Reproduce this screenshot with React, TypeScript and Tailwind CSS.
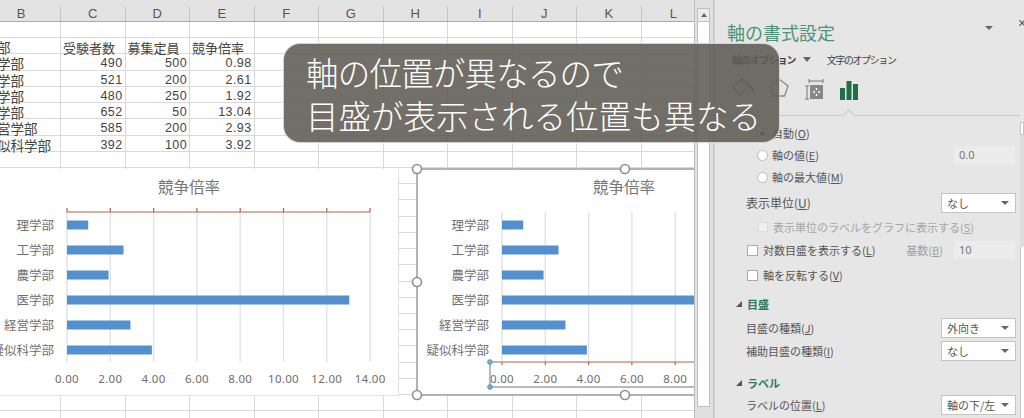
import React from "react";

const JP = "font-['Noto_Sans_CJK_JP','Noto_Sans',sans-serif]";
const colWidths = [61, 64.5, 64.5, 64.5, 64.5, 64.5, 64.5, 64.5, 64.5, 64.5, 64.5];
const letters = ["B", "C", "D", "E", "F", "G", "H", "I", "J", "K", "L"];
const rows: [string, string, string, string][] = [
  ["", "", "", ""],
  ["部", "受験者数", "募集定員", "競争倍率"],
  ["学部", "490", "500", "0.98"],
  ["学部", "521", "200", "2.61"],
  ["学部", "480", "250", "1.92"],
  ["学部", "652", "50", "13.04"],
  ["営学部", "585", "200", "2.93"],
  ["似科学部", "392", "100", "3.92"],
];
const cats = ["理学部", "工学部", "農学部", "医学部", "経営学部", "疑似科学部"];
const vals = [0.98, 2.61, 1.92, 13.04, 2.93, 3.92];
const U = 21.65;

function Chart({ x0, titleX, top, max, labelsRight }: { x0: number; titleX: number; top: boolean; max: number; labelsRight: number }) {
  const ticks: number[] = [];
  for (let i = 0; i <= max; i += 2) ticks.push(i);
  const axisY = top ? 43 : 193;
  return (
    <>
      <text x={titleX} y={24} textAnchor="middle" fontSize="15.5" fill="#777" fontFamily="Noto Sans CJK JP">競争倍率</text>
      {ticks.map((t) => (
        <line key={t} x1={x0 + t * U} x2={x0 + t * U} y1={43} y2={193} stroke="#e3e3e3" strokeWidth="1.4" />
      ))}
      {vals.map((v, i) => (
        <rect key={i} x={x0} y={51.5 + i * 25} width={v * U} height={9} fill="#5290d0" />
      ))}
      {cats.map((c, i) => (
        <text key={c} x={labelsRight} y={60.5 + i * 25} textAnchor="end" fontSize="12.5" fill="#707070" fontFamily="Noto Sans CJK JP">{c}</text>
      ))}
      <line x1={x0} x2={x0 + max * U + (top ? 0 : 30)} y1={axisY} y2={axisY} stroke="#b5604c" strokeWidth="1.2" />
      {ticks.map((t) => (
        <line key={t} x1={x0 + t * U} x2={x0 + t * U} y1={top ? axisY - 4 : axisY} y2={top ? axisY : axisY + 3} stroke="#b5604c" strokeWidth="1.2" />
      ))}
      {ticks.map((t) => (
        <text key={t} x={x0 + t * U} y={214} textAnchor="middle" fontSize="11.5" letterSpacing="0.3" fill="#6e6e6e" fontFamily="Noto Sans">{t.toFixed(2)}</text>
      ))}
    </>
  );
}

function Tri() {
  return <span className="w-0 h-0 border-x-[4px] border-x-transparent border-t-[4px] border-t-[#666]" />;
}

function Select({ v }: { v: string }) {
  return (
    <div className="w-[75px] h-[20px] bg-white border border-[#c4c4c4] flex items-center justify-between pl-[5px] pr-[6px] text-[11px] text-[#555]">
      <span>{v}</span>
      <Tri />
    </div>
  );
}

function Field({ v }: { v: string }) {
  return <div className="w-[61px] h-[18px] bg-[#ececec] flex items-center pl-[5px] text-[11px] text-[#777] font-['Noto_Sans',sans-serif]">{v}</div>;
}

function Radio({ on }: { on?: boolean }) {
  return (
    <span className="w-[11px] h-[11px] rounded-full border border-[#bbb] bg-white flex items-center justify-center mr-[4px]">
      {on && <span className="w-[5px] h-[5px] rounded-full bg-[#777]" />}
    </span>
  );
}

function Check({ off }: { off?: boolean }) {
  return <span className={off ? "w-[10px] h-[10px] bg-[#f0f0f0] border border-[#ddd] mr-[5px]" : "w-[11px] h-[11px] bg-white border border-[#aaa] mr-[5px]"} />;
}

function Section({ t, cls }: { t: string; cls: string }) {
  return (
    <div className={`h-[22px] flex items-center pl-[21px] ${cls}`}>
      <span className="w-0 h-0 border-l-[6px] border-l-transparent border-b-[6px] border-b-[#555] mr-[5px]" />
      <span className="text-[11px] font-bold text-[#2f7a5c]">{t}</span>
    </div>
  );
}

export default function App() {
  return (
    <div className={`relative w-[1024px] h-[418px] overflow-hidden flex bg-[#e6e6e6] ${JP}`}>
      {/* sheet */}
      <div className="relative w-[695px] h-[418px] overflow-hidden bg-white shrink-0 border-r border-[#bdbdbd]">
        <div className="flex h-[22px] pt-[6px] bg-[#e3e3e3] border-b border-[#aaa] w-[800px]">
          {letters.map((l, i) => (
            <div
              key={l}
              style={{ width: colWidths[i] }}
              className={`border-r border-[#c6c6c6] flex items-center justify-center text-[13px] text-[#555] font-['Liberation_Sans',sans-serif] ${l === "B" ? "pr-[18px]" : ""}`}
            >
              {l}
            </div>
          ))}
        </div>
        <div className="w-[800px]">
          {Array.from({ length: 25 }).map((_, r) => (
            <div key={r} className="flex h-[16.22px] border-b border-[#d9d9d9]">
              {colWidths.map((w, c) => {
                const row = rows[r];
                const txt = row && c < 4 ? row[c] : "";
                const isHead = r === 1 && c > 0;
                const isNum = r > 1 && c > 0 && c < 4;
                return (
                  <div
                    key={c}
                    style={{ width: w }}
                    className={`border-r border-[#d9d9d9] flex items-start leading-[19px] whitespace-nowrap text-[#444] ${
                      c === 0 ? "text-[13.5px]" : isHead ? "text-[13px] pl-[2px]" : isNum ? "justify-end pr-[2px] text-[12.5px] tracking-[0.4px] font-['Liberation_Sans',sans-serif]" : ""
                    }`}
                  >
                    {c === 0 ? <span className="-ml-[3px]">{txt}</span> : txt}
                  </div>
                );
              })}
            </div>
          ))}
        </div>

        {/* chart 1 */}
        <svg className="absolute left-0 top-[169px] bg-white border-r border-b border-[#e2e2e2]" width={399} height={227}>
          <Chart x0={67} titleX={189} top max={14} labelsRight={54} />
        </svg>

        {/* chart 2 */}
        <svg className="absolute left-[412px] top-[164px] overflow-visible" width={283} height={236}>
          <rect x={5} y={5} width={290} height={226} fill="#fff" stroke="#ababab" strokeWidth="1.8" />
          <g transform="translate(5 5)">
            <Chart x0={85} titleX={207} top={false} max={8} labelsRight={72} />
            <path d="M73 193H85M73 193V218H283" fill="none" stroke="#a3a3a3" strokeWidth="1.5" />
            <circle cx={73} cy={193} r={2.3} fill="#7fb0d8" stroke="#4f8fc0" />
            <circle cx={73} cy={218} r={2.3} fill="#7fb0d8" stroke="#4f8fc0" />
          </g>
          {[
            [5, 5],
            [213, 5],
            [5, 118],
            [5, 231],
            [213, 231],
          ].map(([x, y]) => (
            <circle key={`${x}-${y}`} cx={x} cy={y} r={4.5} fill="#fff" stroke="#8f8f8f" strokeWidth="1.6" />
          ))}
        </svg>
      </div>

      {/* vertical scrollbar */}
      <div className="w-[19px] h-[418px] shrink-0 pl-[2px] pt-[8px] flex flex-col bg-[#e0e0e0] border-r border-[#c8c8c8]">
        <div className="w-[13px] h-[399px] bg-white border border-[#c0c0c0] flex flex-col">
          <div className="h-[13px] bg-[#ececec] border-b border-[#c0c0c0] flex items-center justify-center">
            <span className="w-0 h-0 border-x-[3px] border-x-transparent border-b-[4px] border-b-[#666]" />
          </div>
        </div>
      </div>

      {/* panel */}
      <div className="relative w-[306px] h-[418px] shrink-0 bg-[#e6e6e6] flex flex-col text-[#555] border-l border-[#d4d4d4]">
        <div className="mt-[14px] h-[36px] flex items-center pl-[12px] text-[18px] text-[#4f9277] relative">
          軸の書式設定
          <span className="absolute left-[270px] top-[12px] w-0 h-0 border-x-[4px] border-x-transparent border-t-[4px] border-t-[#666]" />
          <span className="absolute left-[303px] top-[2px] text-[14px] leading-none text-[#555] font-['Liberation_Sans',sans-serif]">×</span>
        </div>
        <div className="h-[18px] flex items-center pl-[17px] text-[10px] whitespace-nowrap">
          <span className="font-bold tracking-[-0.9px] text-[#444]">軸のオプション</span>
          <span className="ml-[7px] w-0 h-0 border-x-[4px] border-x-transparent border-t-[5px] border-t-[#666]" />
          <span className="ml-[16px] tracking-[-1.4px] text-[#444]">文字のオプション</span>
        </div>
        <div className="h-[40px] flex items-center pl-[16px]">
          <svg width="24" height="24" viewBox="0 0 24 24" fill="none" stroke="#8a8a8a" strokeWidth="1.3">
            <path d="M11 2L2 11l7 8 9-9z" />
            <path d="M11 2v7" />
            <path d="M18 10c2 0 4 3 4 6" stroke="#777" strokeWidth="2" />
          </svg>
          <svg width="22" height="24" viewBox="0 0 22 24" fill="none" stroke="#8a8a8a" strokeWidth="1.3" className="ml-[13px]">
            <path d="M11 3l9 7-3.4 10H5.4L2 10z" />
          </svg>
          <svg width="20" height="22" viewBox="0 0 20 22" className="ml-[14px] mt-[3px]" fill="none" stroke="#777" strokeWidth="1">
            <path d="M5 2h14M5 0v4M19 0v4M1 7h4M3 7v13M1 20h4" />
            <rect x="6" y="6" width="13" height="14" fill="#888" stroke="none" />
            <path d="M12.5 9v2M12.5 15v2M9 13h2M14 13h2" stroke="#fff" strokeWidth="1.4" />
          </svg>
          <svg width="20" height="20" viewBox="0 0 20 20" className="ml-[15px] mt-[3px]" fill="#1f6e45">
            <rect x="1" y="8" width="5" height="12" />
            <rect x="7.5" y="1" width="5" height="19" />
            <rect x="14" y="4" width="5" height="16" />
          </svg>
        </div>
        <div className="h-[8px] border-b border-[#c9c9c9] relative shrink-0">
          <span className="absolute left-[130px] top-[3px] w-[8px] h-[8px] rotate-45 bg-[#e6e6e6] border-l border-t border-[#c9c9c9]" />
        </div>

        <div className="text-[11px] flex flex-col">
          <div className="mt-[6px] h-[22px] flex items-center pl-[42px]"><Radio on />自動(<u>O</u>)</div>
          <div className="h-[22px] flex items-center justify-between pr-[5px]">
            <span className="flex items-center pl-[42px]"><Radio />軸の値(<u>E</u>)</span>
            <Field v="0.0" />
          </div>
          <div className="h-[22px] flex items-center pl-[42px]"><Radio />軸の最大値(<u>M</u>)</div>
          <div className="mt-[4px] h-[22px] flex items-center justify-between pl-[31px] pr-[4px]">
            <span className="text-[12px]">表示単位(<u>U</u>)</span>
            <Select v="なし" />
          </div>
          <div className="mt-[2px] h-[22px] flex items-center pl-[43px] text-[#a5a5a5]"><Check off />表示単位のラベルをグラフに表示する(<u>S</u>)</div>
          <div className="mt-[1px] h-[22px] flex items-center justify-between pl-[32px] pr-[5px]">
            <span className="flex items-center"><Check />対数目盛を表示する(<u>L</u>)</span>
            <span className="flex items-center">
              <span className="text-[#a0a0a0] mr-[11px]">基数(<u>B</u>)</span>
              <Field v="10" />
            </span>
          </div>
          <div className="mt-[3px] h-[22px] flex items-center pl-[32px]"><Check />軸を反転する(<u>V</u>)</div>
          <Section t="目盛" cls="mt-[7px]" />
          <div className="mt-[2px] h-[22px] flex items-center justify-between pl-[31px] pr-[4px]">
            <span>目盛の種類(<u>J</u>)</span>
            <Select v="外向き" />
          </div>
          <div className="mt-[1px] h-[22px] flex items-center justify-between pl-[31px] pr-[4px]">
            <span>補助目盛の種類(<u>I</u>)</span>
            <Select v="なし" />
          </div>
          <Section t="ラベル" cls="mt-[10px]" />
          <div className="h-[22px] flex items-center justify-between pl-[31px] pr-[4px]">
            <span>ラベルの位置(<u>L</u>)</span>
            <Select v="軸の下/左" />
          </div>
        </div>
      </div>

      {/* right scrollbar */}
      <div className="flex-1 h-[418px] flex flex-col pt-[122px] bg-[#e6e6e6]">
        <div className="h-[13px] bg-white border border-[#c4c4c4]" />
        <div className="h-[112px] bg-[#dedede]" />
        <div className="flex-1 bg-white border-l border-[#c4c4c4]" />
      </div>

      {/* callout */}
      <div className="absolute left-[283px] top-[43px] w-[497px] h-[100px] rounded-[17px] bg-[#5f5b54]/[0.88] border border-white/70 pl-[22px] pt-[6px] text-white text-[32.5px] leading-[43px] font-light whitespace-nowrap">
        <div className="tracking-[-0.8px]">軸の位置が異なるので</div>
        <div>目盛が表示される位置も異なる</div>
      </div>
    </div>
  );
}
